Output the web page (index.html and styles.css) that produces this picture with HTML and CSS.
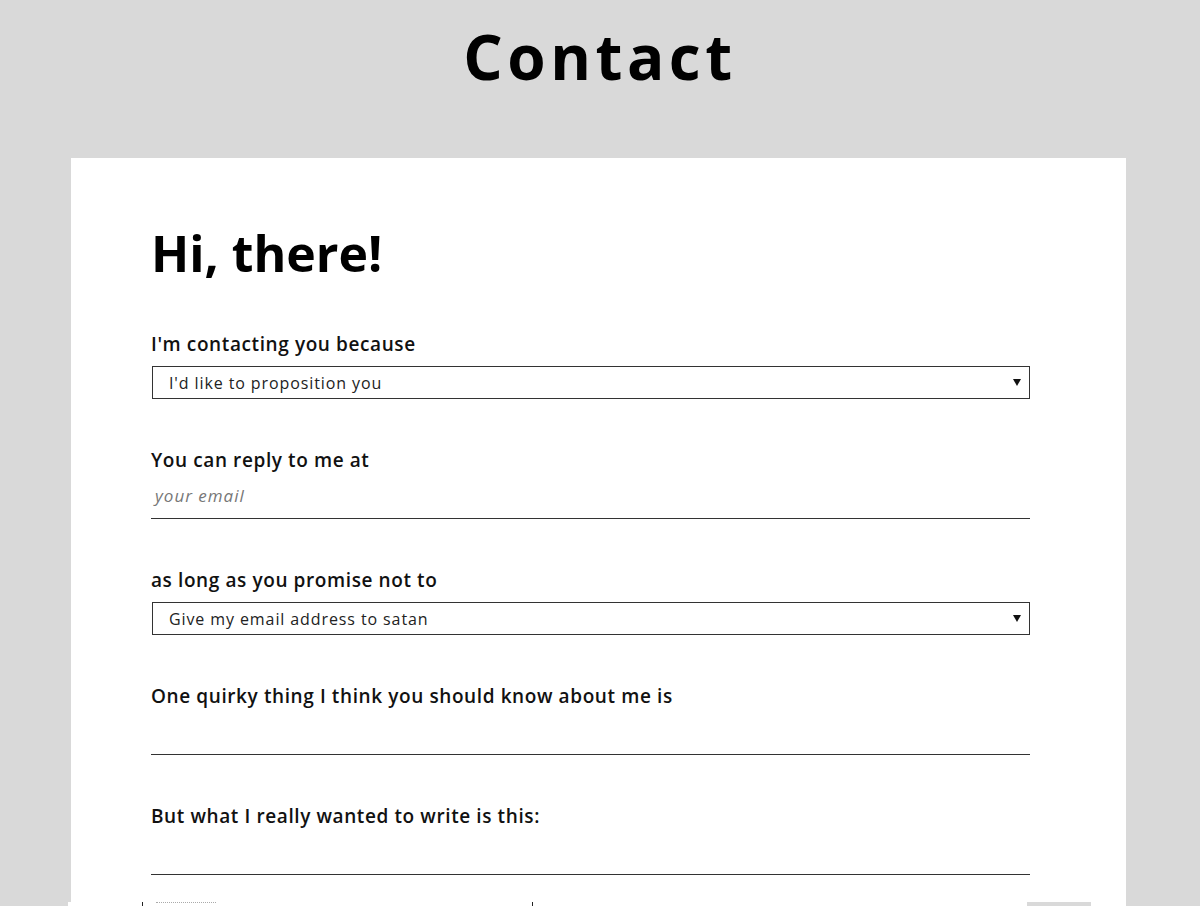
FILE: index.html
```html
<!DOCTYPE html>
<html lang="en">
<head>
<meta charset="utf-8">
<title>Contact</title>
<link rel="stylesheet" href="styles.css">
</head>
<body>
<header class="page-head">
  <h1 class="page-title">Contact</h1>
</header>
<main class="card">
  <h2 class="greeting">Hi, there!</h2>
  <form class="form">
    <div class="field">
      <label class="label">I'm contacting you because</label>
      <div class="select">
        <span class="select-text">I'd like to proposition you</span>
        <span class="caret"></span>
      </div>
    </div>
    <div class="field">
      <label class="label">You can reply to me at</label>
      <div class="line-input"><span class="placeholder">your email</span></div>
    </div>
    <div class="field">
      <label class="label">as long as you promise not to</label>
      <div class="select">
        <span class="select-text">Give my email address to satan</span>
        <span class="caret"></span>
      </div>
    </div>
    <div class="field">
      <label class="label">One quirky thing I think you should know about me is</label>
      <div class="line-input"></div>
    </div>
    <div class="field">
      <label class="label">But what I really wanted to write is this:</label>
      <div class="line-input"></div>
    </div>
  </form>
</main>
<div class="glitch">
  <span class="glitch-mark first"></span>
  <span class="glitch-dots"></span>
  <span class="glitch-mark second"></span>
  <span class="glitch-box"></span>
</div>
</body>
</html>
```

FILE: styles.css
```css
html, body {
  margin: 0;
  padding: 0;
  background: #d9d9d9;
  height: 906px;
  overflow: hidden;
  font-family: "Open Sans", "Noto Sans", sans-serif;
  color: #111;
}

.page-head {
  height: 158px;
  display: flex;
  justify-content: center;
}

.page-title {
  margin: 22px 0 0 0;
  font-size: 62px;
  font-weight: 700;
  letter-spacing: 4.5px;
  line-height: 1.1;
  color: #000;
}

.card {
  margin-left: 71px;
  width: 1055px;
  height: 760px;
  background: #fff;
  box-sizing: border-box;
  padding: 63px 96px 0 80px;
}

.greeting {
  margin: 0;
  font-size: 50px;
  font-weight: 700;
  line-height: 1.3;
  color: #000;
}

.form {
  margin-top: 45px;
  display: flex;
  flex-direction: column;
  gap: 48px;
}

.field {
  display: flex;
  flex-direction: column;
}

.label {
  font-size: 19px;
  font-weight: 600;
  line-height: 26px;
  letter-spacing: 0.6px;
  color: #111;
}

.select {
  margin-top: 9px;
  margin-left: 1px;
  height: 33px;
  box-sizing: border-box;
  border: 1px solid #333;
  display: flex;
  align-items: center;
  justify-content: space-between;
  padding: 0 8px 0 16px;
}

.select-text {
  font-size: 16px;
  letter-spacing: 0.9px;
  color: #222;
}

.caret {
  width: 0;
  height: 0;
  border-left: 4px solid transparent;
  border-right: 4px solid transparent;
  border-top: 7px solid #111;
}

.line-input {
  height: 45px;
  border-bottom: 1px solid #333;
  display: flex;
  align-items: center;
  padding-left: 4px;
}

.placeholder {
  font-size: 17px;
  font-style: italic;
  letter-spacing: 1px;
  color: #777;
}

.glitch {
  position: fixed;
  left: 68px;
  top: 902px;
  width: 1058px;
  height: 4px;
  background: #fff;
}

.glitch-mark {
  position: absolute;
  top: 0;
  width: 1px;
  height: 4px;
  background: #222;
}

.glitch-mark.first { left: 74px; }
.glitch-mark.second { left: 464px; }

.glitch-dots {
  position: absolute;
  left: 88px;
  top: 0;
  width: 60px;
  height: 2px;
  border-top: 1px dotted #aaa;
}

.glitch-box {
  position: absolute;
  left: 959px;
  top: 0;
  width: 64px;
  height: 4px;
  background: #d9d9d9;
}
```
